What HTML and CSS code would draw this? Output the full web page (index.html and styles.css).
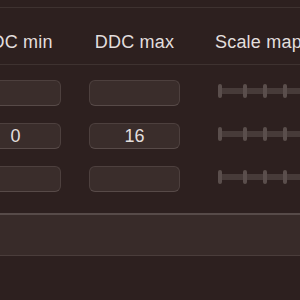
FILE: index.html
```html
<!DOCTYPE html>
<html lang="en">
<head>
    <meta charset="UTF-8">
    <meta name="viewport" content="width=device-width, initial-scale=1.0">
    <title>DDC mapping</title>
    <link rel="stylesheet" href="styles.css">
</head>
<body>
    <div class="panel">
        <div class="table header">
            <div class="col-title">DDC min</div>
            <div class="col-title">DDC max</div>
            <div class="col-title scale-title">Scale mapping</div>
        </div>
        <div class="rows">
            <div class="table">
                <div class="field"></div>
                <div class="field"></div>
                <div class="slider">
                    <span class="tick first"></span><span class="tick"></span><span class="tick"></span><span class="tick"></span><span class="tick"></span>
                </div>
            </div>
            <div class="table">
                <div class="field">0</div>
                <div class="field">16</div>
                <div class="slider">
                    <span class="tick first"></span><span class="tick"></span><span class="tick"></span><span class="tick"></span><span class="tick"></span>
                </div>
            </div>
            <div class="table">
                <div class="field"></div>
                <div class="field"></div>
                <div class="slider">
                    <span class="tick first"></span><span class="tick"></span><span class="tick"></span><span class="tick"></span><span class="tick"></span>
                </div>
            </div>
        </div>
        <div class="footer-bar"></div>
    </div>
</body>
</html>
```

FILE: styles.css
```css
body {
    margin: 0;
    padding: 0;
    background-color: #2d201f;
    font-family: "Liberation Sans", Arial, sans-serif;
    color: #e2dedd;
    overflow: hidden;
}

.panel {
    margin-top: 7px;
    border-top: 1px solid #3e3230;
}

.table {
    display: grid;
    grid-template-columns: 91px 91px 200px;
    column-gap: 28px;
    margin-left: -30px;
}

.header {
    height: 56px;
    align-items: start;
    border-bottom: 1px solid #3e3230;
}

.col-title {
    padding-top: 24px;
    font-size: 18px;
    letter-spacing: 0.2px;
    text-align: center;
    white-space: nowrap;
}

.scale-title {
    text-align: left;
    padding-left: 7px;
}

.rows {
    display: flex;
    flex-direction: column;
    gap: 17px;
    padding-top: 15px;
}

.field {
    height: 24px;
    line-height: 24px;
    background-color: #3a2d2b;
    border: 1px solid #4d403e;
    border-bottom-color: #574a48;
    border-radius: 6px;
    font-size: 18px;
    text-align: center;
}

.slider {
    display: flex;
    align-items: center;
    gap: 16px;
    height: 14px;
    margin-top: 4px;
    margin-left: 10px;
    background: linear-gradient(#473b39, #473b39) center / 100% 6px no-repeat;
}

.tick {
    flex: none;
    width: 4px;
    height: 14px;
    border-radius: 2px;
    background-color: #5a4e4c;
}

.tick.first {
    margin-right: 5px;
}

.footer-bar {
    margin-top: 21px;
    height: 40px;
    background-color: #382b29;
    border-top: 2px solid #574b49;
    border-bottom: 1px solid #4a3d3b;
}
```
